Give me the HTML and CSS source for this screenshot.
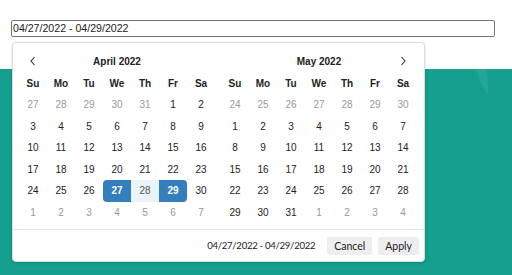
FILE: index.html
```html
<!DOCTYPE html>
<html lang="en">
<head>
    <meta charset="UTF-8">
    <meta name="viewport" content="width=device-width, initial-scale=1.0">
    <title>Date Range</title>
    <link rel="stylesheet" href="styles.css">
</head>
<body>
    <div class="top">
        <div class="field">04/27/2022 - 04/29/2022</div>
    </div>
    <div class="band">
        <svg class="leaf" width="20" height="30" viewBox="0 0 20 30">
            <path d="M2 0 C4 10 10 20 14 26 C15 18 14 8 12 0 Z" fill="#ffffff" opacity="0.08"/>
        </svg>
    </div>

    <div class="picker">
        <div class="calendars">
            <div class="cal" id="left"></div>
            <div class="cal" id="right"></div>
        </div>
        <div class="footer">
            <span class="range">04/27/2022 - 04/29/2022</span>
            <button class="btn">Cancel</button>
            <button class="btn">Apply</button>
        </div>
    </div>

    <script>
        const names = ['Su', 'Mo', 'Tu', 'We', 'Th', 'Fr', 'Sa'];
        const months = ['January', 'February', 'March', 'April', 'May', 'June', 'July',
            'August', 'September', 'October', 'November', 'December'];
        const start = new Date(2022, 3, 27);
        const end = new Date(2022, 3, 29);
        const prevIcon = '<svg width="8" height="10" viewBox="0 0 8 10"><path d="M5.5 1 L2 5 L5.5 9" fill="none" stroke="#333" stroke-width="1.1"/></svg>';
        const nextIcon = '<svg width="8" height="10" viewBox="0 0 8 10"><path d="M2.5 1 L6 5 L2.5 9" fill="none" stroke="#333" stroke-width="1.1"/></svg>';

        function buildCalendar(el, year, month, prev, next) {
            let html = '<div class="head">';
            html += '<span class="nav">' + (prev ? prevIcon : '') + '</span>';
            html += '<span class="month">' + months[month] + ' ' + year + '</span>';
            html += '<span class="nav">' + (next ? nextIcon : '') + '</span>';
            html += '</div><table><tr class="days">';
            for (let n of names) {
                html += '<th>' + n + '</th>';
            }
            html += '</tr>';

            let first = new Date(year, month, 1);
            let back = first.getDay() === 0 ? 7 : first.getDay();
            let day = new Date(year, month, 1 - back);
            for (let r = 0; r < 6; r++) {
                html += '<tr>';
                for (let c = 0; c < 7; c++) {
                    let cls = [];
                    if (day.getMonth() !== month) cls.push('off');
                    else {
                        if (day.getTime() === start.getTime()) cls.push('active', 'start');
                        else if (day.getTime() === end.getTime()) cls.push('active', 'end');
                        else if (day > start && day < end) cls.push('in-range');
                    }
                    html += '<td class="' + cls.join(' ') + '">' + day.getDate() + '</td>';
                    day.setDate(day.getDate() + 1);
                }
                html += '</tr>';
            }
            html += '</table>';
            el.innerHTML = html;
        }

        buildCalendar(document.getElementById('left'), 2022, 3, true, false);
        buildCalendar(document.getElementById('right'), 2022, 4, false, true);
    </script>
</body>
</html>
```

FILE: styles.css
```css
body {
    margin: 0;
    padding: 0;
    font-family: 'Liberation Sans', Arial, sans-serif;
    background-color: #fff;
    height: 275px;
    overflow: hidden;
    display: flex;
    flex-direction: column;
}
.top {
    height: 69px;
    padding: 20px 0 0 11px;
    box-sizing: border-box;
}
.field {
    width: 484px;
    height: 17px;
    box-sizing: border-box;
    border: 1px solid #767676;
    border-radius: 2px;
    font-size: 10.6px;
    line-height: 15px;
    padding-left: 1px;
    color: #222;
}
.band {
    flex: 1;
    background-color: #149f8f;
    position: relative;
}
.leaf {
    position: absolute;
    left: 474px;
    top: 0;
}
.picker {
    position: absolute;
    left: 12px;
    top: 42px;
    width: 413px;
    height: 220px;
    box-sizing: border-box;
    background-color: #fff;
    border: 1px solid #ddd;
    border-radius: 4px;
    box-shadow: 0 1px 3px rgba(0, 0, 0, 0.15);
    display: flex;
    flex-direction: column;
}
.calendars {
    display: flex;
    gap: 6px;
    padding: 7px 7px 6px 6px;
    border-bottom: 1px solid #e5e5e5;
}
.head {
    display: flex;
    align-items: center;
    height: 22px;
    font-size: 10px;
    color: #222;
}
.nav {
    width: 28px;
}
.nav svg {
    display: block;
    margin: 0 auto;
}
.month {
    flex: 1;
    text-align: center;
    font-weight: bold;
}
.cal table {
    border-collapse: collapse;
    border-spacing: 0;
    table-layout: fixed;
    width: 196px;
}
.cal th,
.cal td {
    width: 28px;
    height: 21.5px;
    padding: 0;
    text-align: center;
    font-size: 10px;
    color: #222;
}
.days th {
    font-weight: bold;
    height: 22px;
}
.cal td.off {
    color: #999;
}
.cal td.in-range {
    background-color: #ebf4f8;
    color: #555;
}
.cal td.active {
    background-color: #357ebd;
    color: #fff;
    font-weight: bold;
}
.cal td.start {
    border-radius: 4px 0 0 4px;
}
.cal td.end {
    border-radius: 0 4px 4px 0;
}
.footer {
    flex: 1;
    display: flex;
    align-items: center;
    justify-content: flex-end;
    gap: 6px;
    padding: 0 5px;
}
.range {
    font-family: 'Lato', sans-serif;
    font-size: 9.6px;
    letter-spacing: -0.3px;
    color: #222;
    margin-right: 6px;
}
.btn {
    font-family: 'Lato', sans-serif;
    font-size: 10.5px;
    color: #222;
    background-color: #eee;
    border: none;
    border-radius: 2px;
    height: 18px;
    padding: 0 7px;
}
```
